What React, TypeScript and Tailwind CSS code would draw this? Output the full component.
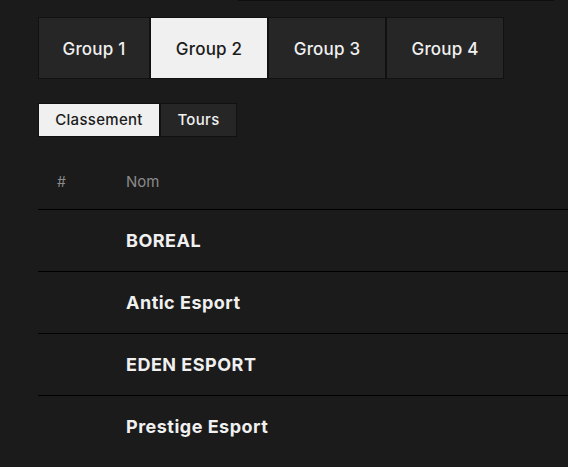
const groups = ["Group 1", "Group 2", "Group 3", "Group 4"];
const groupWidths = ["w-[112px]", "w-[118px]", "w-[118px]", "w-[118px]"];
const teams = ["BOREAL", "Antic Esport", "EDEN ESPORT", "Prestige Esport"];

export default function App() {
  const activeGroup = 1;

  return (
    <div
      className="min-h-[467px] overflow-hidden bg-[#1b1b1b] text-[#f0f0f0]"
      style={{ fontFamily: "Inter, 'Noto Sans', sans-serif" }}
    >
      <div className="ml-[238px] h-px w-[316px] bg-[#0e0e0e]" />

      <div className="pl-[38px] pt-[16px]">
        <div className="flex">
          {groups.map((g, i) => (
            <button
              key={g}
              className={`${groupWidths[i]} h-[62px] border border-[#111] pt-[3px] text-[17px] font-medium tracking-[0.2px] ${
                i === activeGroup ? "bg-[#f0f0f0] text-[#1b1b1b]" : "bg-[#262626] text-[#f0f0f0]"
              }`}
            >
              {g}
            </button>
          ))}
        </div>

        <div className="mt-[24px] flex">
          <button className="h-[34px] w-[122px] border border-[#111] bg-[#f0f0f0] text-[15px] font-medium tracking-[0.3px] text-[#1b1b1b]">
            Classement
          </button>
          <button className="h-[34px] w-[77px] border border-[#111] bg-[#262626] text-[15px] font-medium tracking-[0.3px] text-[#f0f0f0]">
            Tours
          </button>
        </div>

        <table className="mt-[10px] w-[600px] border-collapse text-left">
          <thead>
            <tr className="h-[62px] border-b border-black">
              <th className="w-[88px] pl-[19px] pt-[8px] text-[14px] font-normal text-[#8a8a8a]">#</th>
              <th className="pt-[8px] text-[15px] font-normal text-[#8a8a8a]">Nom</th>
            </tr>
          </thead>
          <tbody>
            {teams.map((t, i) => (
              <tr
                key={t}
                className={`h-[62px] ${i < teams.length - 1 ? "border-b border-black" : ""}`}
              >
                <td className="pl-[19px]" />
                <td className="text-[18px] font-bold tracking-[0.5px]">{t}</td>
              </tr>
            ))}
          </tbody>
        </table>
      </div>
    </div>
  );
}
